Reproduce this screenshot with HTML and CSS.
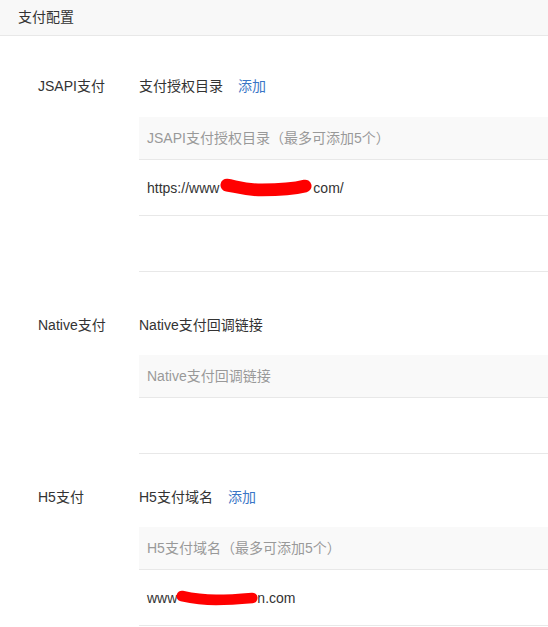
FILE: index.html
```html
<!DOCTYPE html>
<html lang="zh-CN">
<head>
<meta charset="utf-8">
<title>支付配置</title>
<link rel="stylesheet" href="styles.css">
</head>
<body>
<div class="panel">
  <div class="panel-head">支付配置</div>

  <div class="section section--jsapi">
    <div class="label">JSAPI支付</div>
    <div class="content">
      <div class="title-row"><span>支付授权目录</span><a class="add">添加</a></div>
      <div class="table">
        <div class="thead">JSAPI支付授权目录（最多可添加5个）</div>
        <div class="row">https://www<span class="redact redact--long"><svg width="96" height="22" viewBox="0 0 96 22"><path d="M8 8 C 16 9, 26 13, 44 13 S 76 12, 88 9" fill="none" stroke="#ff0000" stroke-width="13" stroke-linecap="round"/></svg></span>com/</div>
        <div class="row"></div>
      </div>
    </div>
  </div>

  <div class="section section--native">
    <div class="label">Native支付</div>
    <div class="content">
      <div class="title-row"><span>Native支付回调链接</span></div>
      <div class="table">
        <div class="thead">Native支付回调链接</div>
        <div class="row"></div>
      </div>
    </div>
  </div>

  <div class="section section--h5">
    <div class="label">H5支付</div>
    <div class="content">
      <div class="title-row"><span>H5支付域名</span><a class="add">添加</a></div>
      <div class="table">
        <div class="thead">H5支付域名（最多可添加5个）</div>
        <div class="row">www<span class="redact redact--short"><svg width="86" height="18" viewBox="0 0 86 18"><path d="M7 7 C 16 9, 28 11, 42 11 S 68 10, 79 9" fill="none" stroke="#ff0000" stroke-width="11" stroke-linecap="round"/></svg></span>n.com</div>
      </div>
    </div>
  </div>
</div>
</body>
</html>
```

FILE: styles.css
```css
* {
  box-sizing: border-box;
}

html, body {
  margin: 0;
  padding: 0;
  background: #ffffff;
}

body {
  font-family: "Liberation Sans", "Noto Sans CJK SC", sans-serif;
  font-size: 14px;
  color: #333333;
  overflow: hidden;
}

.panel {
  width: 100%;
}

.panel-head {
  height: 36px;
  line-height: 35px;
  padding-left: 18px;
  background: #f8f8f8;
  border-bottom: 1px solid #e8e8e8;
  color: #333333;
}

.section {
  display: flex;
  padding-left: 38px;
}

.section--jsapi {
  padding-top: 40px;
}

.section--native {
  padding-top: 43px;
}

.section--h5 {
  padding-top: 33px;
}

.label {
  width: 101px;
  flex: none;
  line-height: 20px;
  color: #333333;
}

.content {
  flex: 1;
  min-width: 0;
}

.title-row {
  display: flex;
  gap: 15px;
  line-height: 20px;
  margin-bottom: 21px;
}

.section--native .title-row,
.section--h5 .title-row {
  margin-bottom: 20px;
}

.add {
  color: #3b76c6;
  cursor: pointer;
}

.table {
  width: 100%;
}

.thead {
  height: 43px;
  line-height: 42px;
  padding-left: 8px;
  background: #f9f9f9;
  border-bottom: 1px solid #e8e8e8;
  color: #999999;
  white-space: nowrap;
}

.row {
  display: flex;
  align-items: center;
  height: 56px;
  padding-left: 8px;
  border-bottom: 1px solid #e8e8e8;
  color: #333333;
  white-space: nowrap;
}

.redact {
  display: inline-flex;
  align-items: center;
  height: 22px;
}

.redact--long {
  width: 94px;
  margin-left: 0;
  margin-right: 0;
}

.redact--short {
  width: 84px;
  margin-left: -2px;
  margin-right: -2px;
}

.redact svg {
  display: block;
}
```
